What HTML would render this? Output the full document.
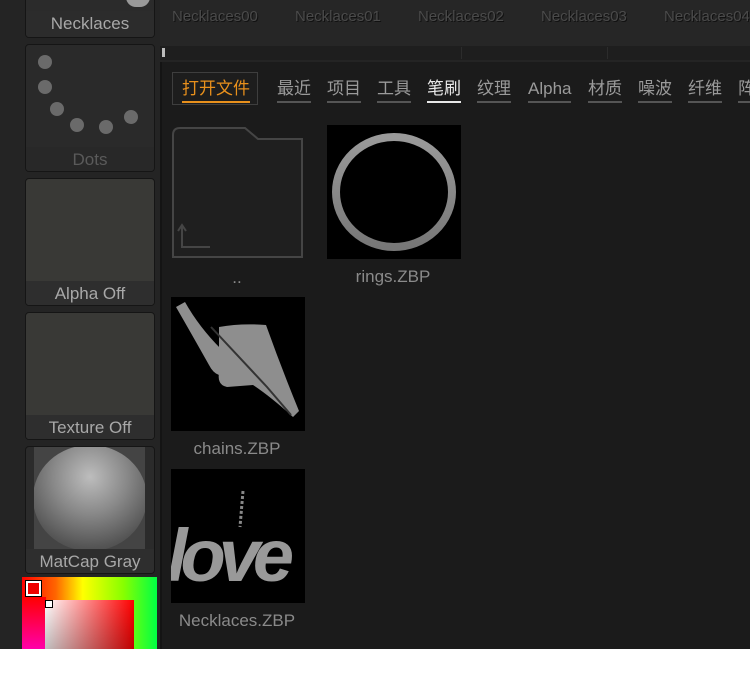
<!DOCTYPE html>
<html><head><meta charset="utf-8"><style>
*{margin:0;padding:0;box-sizing:border-box}
body{width:750px;height:676px;background:#fff;overflow:hidden;font-family:"Liberation Sans","Noto Sans CJK SC",sans-serif;position:relative}
#app{position:absolute;left:0;top:0;width:750px;height:649px;background:#242424;overflow:hidden}
.a{position:absolute}
.card{position:absolute;left:25px;width:130px;height:128px;background:#2b2b2b;border:1px solid #151515;border-radius:4px;overflow:hidden}
.card .lab{position:absolute;left:0;right:0;bottom:0;height:24px;line-height:26px;text-align:center;color:#a8a8a8;font-size:17px;background:#2e2e2e;white-space:nowrap}
.tn{position:absolute;font-size:15px;color:#4a4a4a;text-shadow:1px 1px 0 #111;white-space:nowrap}
.tab{position:absolute;top:78px;font-size:17px;color:#9a9a9a;border-bottom:2px solid #555;line-height:22px;padding-bottom:1px;white-space:nowrap}
.thumb{position:absolute;width:134px;height:134px;background:#000}
.fl{position:absolute;color:#8a8a8a;font-size:17px;text-align:center;width:160px}
</style></head><body><div id="app">
<div class="a" style="left:160px;top:0;width:590px;height:46px;background:#262626"></div>
<div class="tn" style="left:172px;top:8px">Necklaces00</div>
<div class="tn" style="left:295px;top:8px">Necklaces01</div>
<div class="tn" style="left:418px;top:8px">Necklaces02</div>
<div class="tn" style="left:541px;top:8px">Necklaces03</div>
<div class="tn" style="left:664px;top:8px">Necklaces04</div>
<div class="a" style="left:160px;top:46px;width:590px;height:14px;background:#1e1e1e"></div>
<div class="a" style="left:162px;top:48px;width:3px;height:9px;background:#bbb"></div>
<div class="a" style="left:461px;top:47px;width:1px;height:12px;background:#2c2c2c"></div>
<div class="a" style="left:607px;top:47px;width:1px;height:12px;background:#2c2c2c"></div>
<div class="a" style="left:160px;top:62px;width:590px;height:587px;background:#1b1b1b"></div>
<div class="a" style="left:160px;top:62px;width:2px;height:587px;background:#141414"></div>
<div class="card" style="top:-90px"><div class="lab" style="background:#2c2c2c;height:26px">Necklaces</div>
<div class="a" style="left:100px;top:86px;width:24px;height:10px;border-radius:0 0 12px 12px;background:#999"></div></div>
<div class="card" style="top:44px;background:#2a2a2a"><div class="lab" style="color:#5a5a5a;background:#282828">Dots</div>
<div class="a" style="left:12px;top:10px;width:14px;height:14px;border-radius:50%;background:#6a6a6a"></div>
<div class="a" style="left:12px;top:35px;width:14px;height:14px;border-radius:50%;background:#6a6a6a"></div>
<div class="a" style="left:24px;top:57px;width:14px;height:14px;border-radius:50%;background:#6a6a6a"></div>
<div class="a" style="left:44px;top:73px;width:14px;height:14px;border-radius:50%;background:#6a6a6a"></div>
<div class="a" style="left:73px;top:75px;width:14px;height:14px;border-radius:50%;background:#6a6a6a"></div>
<div class="a" style="left:98px;top:65px;width:14px;height:14px;border-radius:50%;background:#6a6a6a"></div></div>
<div class="card" style="top:178px;background:#393936"><div class="lab">Alpha Off</div></div>
<div class="card" style="top:312px;background:#393936"><div class="lab">Texture Off</div></div>
<div class="card" style="top:446px"><div class="lab">MatCap Gray</div>
<div class="a" style="left:8px;top:0;width:111px;height:102px;background:#444;overflow:hidden"><div class="a" style="left:-1px;top:-2px;width:114px;height:106px;border-radius:50%;background:radial-gradient(circle at 50% 30%,#bdbdbd,#888 40%,#555 75%,#3a3a3a)"></div></div></div>
<div class="a" style="left:22px;top:577px;width:135px;height:72px;background:linear-gradient(90deg,#f00 0%,#f60 25%,#ff0 45%,#8f0 75%,#0f4 100%)"></div>
<div class="a" style="left:22px;top:597px;width:24px;height:52px;background:linear-gradient(#f00,#f0a)"></div>
<div class="a" style="left:45px;top:600px;width:89px;height:49px;background:linear-gradient(90deg,#fff,#f00);"></div>
<div class="a" style="left:45px;top:600px;width:89px;height:49px;background:linear-gradient(rgba(0,0,0,0),rgba(0,0,0,.25))"></div>
<div class="a" style="left:26px;top:581px;width:15px;height:15px;background:#e00;border:2px solid #fff;outline:1px solid #000"></div>
<div class="a" style="left:45px;top:600px;width:8px;height:8px;background:#fff;border:1px solid #000"></div>
<div class="a" style="left:172px;top:72px;width:86px;height:33px;border:1px solid #3e3e3e;background:#1d1d1d"></div>
<div class="tab" style="left:182px;color:#e8901c;border-color:#e8901c">打开文件</div>
<div class="tab" style="left:277px">最近</div>
<div class="tab" style="left:327px">项目</div>
<div class="tab" style="left:377px">工具</div>
<div class="tab" style="left:427px;color:#e8e8e8;border-color:#e8e8e8">笔刷</div>
<div class="tab" style="left:477px">纹理</div>
<div class="tab" style="left:528px">Alpha</div>
<div class="tab" style="left:588px">材质</div>
<div class="tab" style="left:638px">噪波</div>
<div class="tab" style="left:688px">纤维</div>
<div class="tab" style="left:738px">阵列</div>
<svg class="a" style="left:170px;top:125px" width="136" height="135"><path d="M3 132 V10 Q3 3 10 3 H75 L88 14 H132 V132 Z" fill="#1f1f1f" stroke="#454545" stroke-width="2"/><path d="M12 100 V122 H40" fill="none" stroke="#454545" stroke-width="2"/><path d="M8 106 L12 100 L16 106" fill="none" stroke="#454545" stroke-width="2"/></svg>
<div class="fl" style="left:157px;top:268px">..</div>
<div class="thumb" style="left:327px;top:125px"><svg width="134" height="134"><defs><linearGradient id="r" x1="0" y1="0" x2="0" y2="1"><stop offset="0" stop-color="#9a9a9a"/><stop offset="1" stop-color="#777"/></linearGradient></defs><ellipse cx="67" cy="67" rx="58" ry="55" fill="none" stroke="url(#r)" stroke-width="8"/></svg></div>
<div class="fl" style="left:313px;top:267px">rings.ZBP</div>
<div class="thumb" style="left:171px;top:297px"><svg width="134" height="134"><path d="M5 10 L14 5 Q28 30 50 52 L48 78 Q42 76 38 68 Q20 36 5 10Z" fill="#8e8e8e"/><path d="M48 30 Q70 26 95 28 Q110 70 128 114 L122 120 Q100 100 82 88 L56 90 Q46 88 48 76 Z" fill="#8e8e8e"/><path d="M40 30 L96 90 L120 118" fill="none" stroke="#333" stroke-width="2"/></svg></div>
<div class="fl" style="left:157px;top:439px">chains.ZBP</div>
<div class="thumb" style="left:171px;top:469px;overflow:hidden"><svg width="134" height="134"><text x="-4" y="112" font-family="Liberation Sans,sans-serif" font-size="74" font-weight="bold" font-style="italic" fill="#999" letter-spacing="-7">love</text><path d="M72 22 L69 58" stroke="#888" stroke-width="3" stroke-dasharray="3 2"/></svg></div>
<div class="fl" style="left:157px;top:611px">Necklaces.ZBP</div>
</div></body></html>
